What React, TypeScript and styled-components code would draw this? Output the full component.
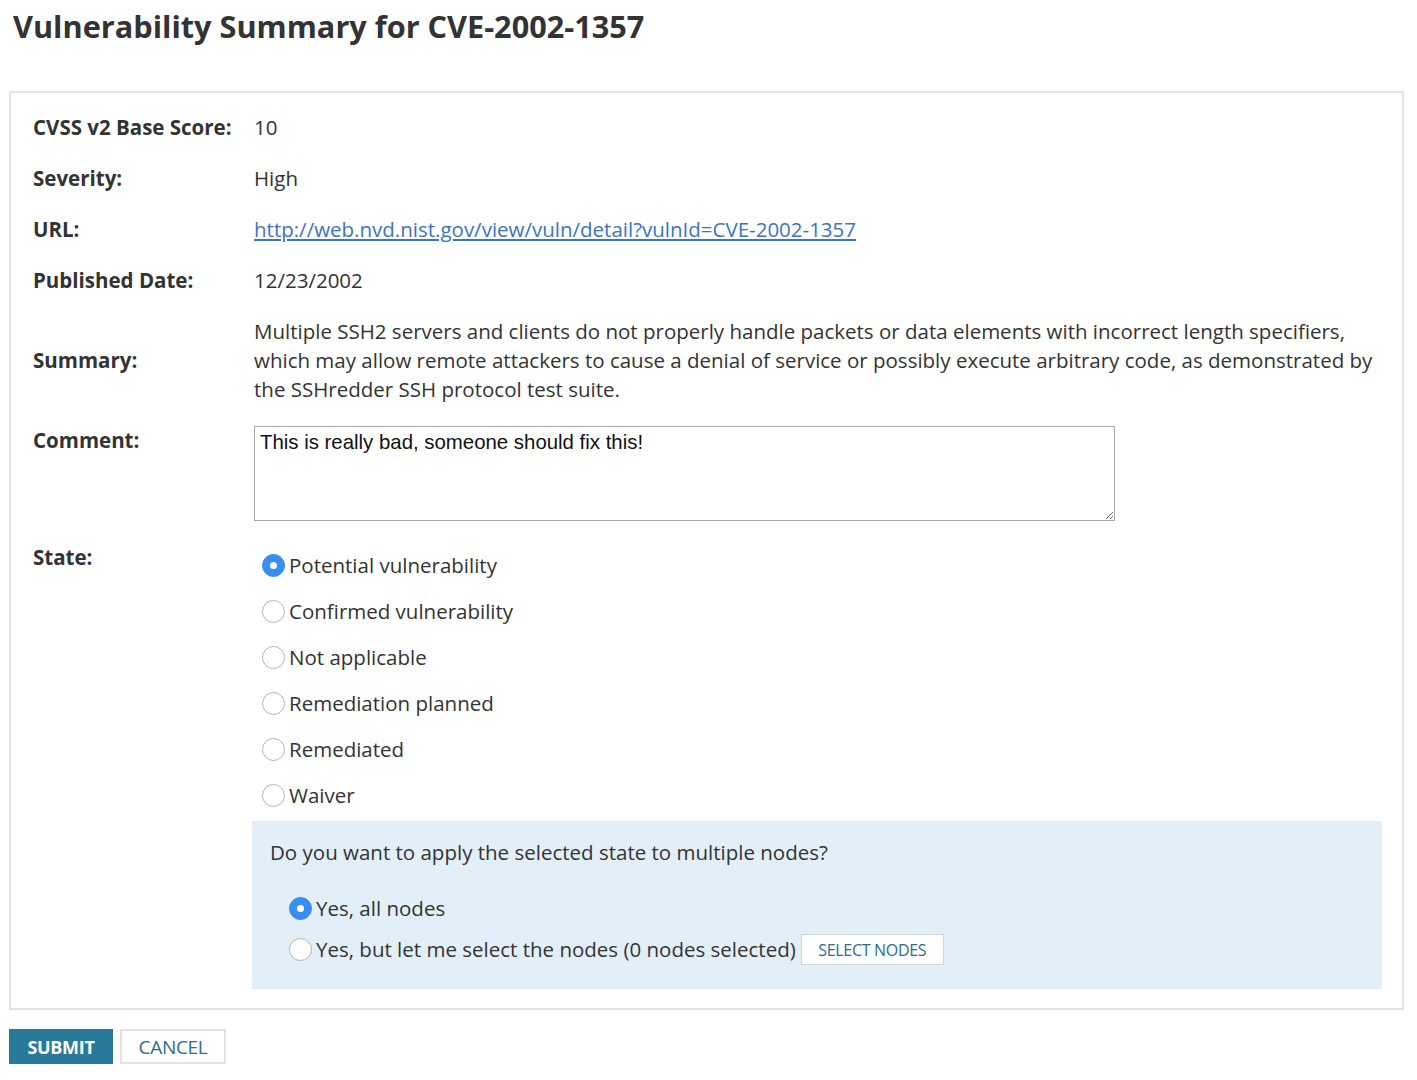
import styled, { createGlobalStyle } from 'styled-components';

const GlobalStyle = createGlobalStyle`
  body {
    margin: 0;
    background: #fff;
    font-family: 'Open Sans', 'Noto Sans', sans-serif;
    color: #333;
  }
`;

const Page = styled.div`
  padding: 0 13px 16px 9px;
  width: 1395px;
`;

const Title = styled.h1`
  margin: 0;
  padding: 6px 0 0 4px;
  height: 85px;
  box-sizing: border-box;
  font-size: 30.7px;
  font-weight: 700;
  line-height: 40px;
  color: #333;
`;

const Panel = styled.div`
  border: 2px solid #e4e4e0;
  padding: 9px 20px 8px 22px;
  margin-top: 6px;
`;

const Row = styled.div<{ $center?: boolean }>`
  display: grid;
  grid-template-columns: 221px 1fr;
  align-items: ${p => (p.$center ? 'center' : 'start')};
  padding: 11px 0;
  font-size: 20.5px;
  line-height: 29px;
`;

const Label = styled.div`
  font-weight: 700;
  color: #333;
`;

const Value = styled.div`
  color: #333;
`;

const Link = styled.a`
  color: #3b73c9;
  text-decoration: underline;
`;

const Comment = styled.textarea`
  display: block;
  width: 861px;
  height: 95px;
  box-sizing: border-box;
  border: 1px solid #a9a9a9;
  padding: 3px 5px;
  font-family: 'Liberation Sans', Arial, sans-serif;
  font-size: 20.4px;
  line-height: 24px;
  color: #111;
  resize: both;
`;

const RadioList = styled.div`
  display: flex;
  flex-direction: column;
`;

const Option = styled.label<{ $height: number }>`
  display: flex;
  align-items: center;
  height: ${p => p.$height}px;
  gap: 4px;
  font-size: 20.5px;
  color: #333;
  cursor: pointer;
`;

const Dot = styled.span<{ $checked?: boolean }>`
  width: 23px;
  height: 23px;
  box-sizing: border-box;
  border-radius: 50%;
  flex: none;
  display: flex;
  align-items: center;
  justify-content: center;
  background: ${p => (p.$checked ? '#3a8ef2' : '#fff')};
  border: ${p => (p.$checked ? '1px solid #3a8ef2' : '1.5px solid #b4b4b4')};
  &::after {
    content: '';
    display: ${p => (p.$checked ? 'block' : 'none')};
    width: 7px;
    height: 7px;
    border-radius: 50%;
    background: #fff;
  }
`;

const StateOptions = styled.div`
  padding-left: 8px;
  margin-top: -1px;
`;

const NodesBox = styled.div`
  margin: 3px 0 0 -2px;
  background: #e3eff8;
  padding: 17px 18px 19px 18px;
`;

const Question = styled.div`
  font-size: 20.5px;
  line-height: 29px;
  color: #333;
  margin-bottom: 21px;
`;

const NodeOptions = styled.div`
  padding-left: 19px;
`;

const SelectNodes = styled.button`
  margin-left: 1px;
  width: 143px;
  height: 31px;
  background: #fff;
  border: 1px solid #cfd6dc;
  font-family: 'Open Sans', sans-serif;
  font-size: 16px;
  letter-spacing: -0.3px;
  color: #2c6e8e;
  text-transform: uppercase;
  cursor: pointer;
`;

const Actions = styled.div`
  display: flex;
  gap: 7px;
  margin-top: 19px;
`;

const Button = styled.button<{ $primary?: boolean }>`
  height: 35px;
  box-sizing: border-box;
  font-family: 'Open Sans', sans-serif;
  font-size: ${p => (p.$primary ? 18 : 19)}px;
  letter-spacing: -0.3px;
  text-transform: uppercase;
  cursor: pointer;
  width: ${p => (p.$primary ? 104 : 106)}px;
  font-weight: ${p => (p.$primary ? 700 : 400)};
  color: ${p => (p.$primary ? '#fff' : '#2c6e8e')};
  background: ${p => (p.$primary ? '#28799a' : '#fff')};
  border: ${p => (p.$primary ? 'none' : '2px solid #e2e2e2')};
`;

const states = [
  'Potential vulnerability',
  'Confirmed vulnerability',
  'Not applicable',
  'Remediation planned',
  'Remediated',
  'Waiver',
];

export default function App() {
  return (
    <Page>
      <GlobalStyle />
      <Title>Vulnerability Summary for CVE-2002-1357</Title>
      <Panel>
        <Row $center>
          <Label>CVSS v2 Base Score:</Label>
          <Value>10</Value>
        </Row>
        <Row $center>
          <Label>Severity:</Label>
          <Value>High</Value>
        </Row>
        <Row $center>
          <Label>URL:</Label>
          <Value>
            <Link href="#">http://web.nvd.nist.gov/view/vuln/detail?vulnId=CVE-2002-1357</Link>
          </Value>
        </Row>
        <Row $center>
          <Label>Published Date:</Label>
          <Value>12/23/2002</Value>
        </Row>
        <Row $center>
          <Label>Summary:</Label>
          <Value>
            Multiple SSH2 servers and clients do not properly handle packets or data elements with incorrect length
            specifiers, which may allow remote attackers to cause a denial of service or possibly execute arbitrary
            code, as demonstrated by the SSHredder SSH protocol test suite.
          </Value>
        </Row>
        <Row>
          <Label>Comment:</Label>
          <Comment defaultValue="This is really bad, someone should fix this!" />
        </Row>
        <Row>
          <Label>State:</Label>
          <div>
            <StateOptions>
              <RadioList>
                {states.map((s, i) => (
                  <Option key={s} $height={46}>
                    <Dot $checked={i === 0} />
                    {s}
                  </Option>
                ))}
              </RadioList>
            </StateOptions>
            <NodesBox>
              <Question>Do you want to apply the selected state to multiple nodes?</Question>
              <NodeOptions>
                <RadioList>
                  <Option $height={41}>
                    <Dot $checked />
                    Yes, all nodes
                  </Option>
                  <Option $height={41}>
                    <Dot />
                    Yes, but let me select the nodes (0 nodes selected)
                    <SelectNodes type="button">Select nodes</SelectNodes>
                  </Option>
                </RadioList>
              </NodeOptions>
            </NodesBox>
          </div>
        </Row>
      </Panel>
      <Actions>
        <Button $primary>Submit</Button>
        <Button>Cancel</Button>
      </Actions>
    </Page>
  );
}
